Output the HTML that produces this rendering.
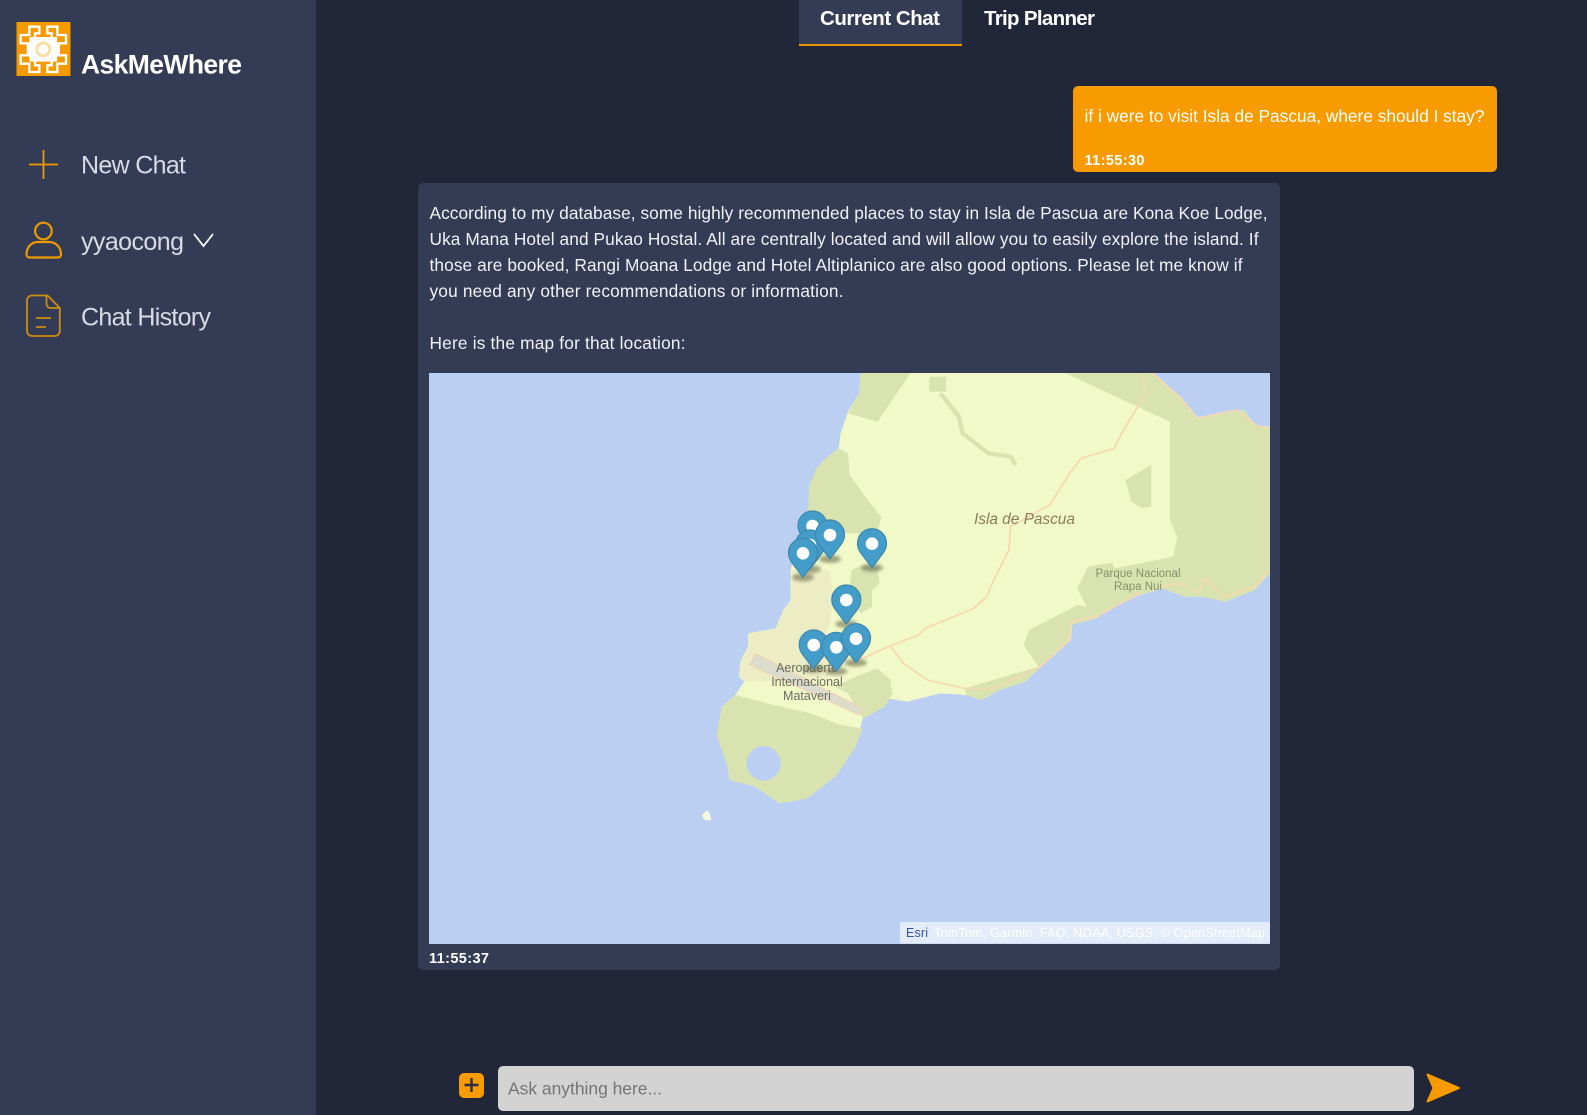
<!DOCTYPE html>
<html lang="en"><head><meta charset="utf-8"><title>AskMeWhere</title>
<style>
html,body{margin:0;padding:0;width:1587px;height:1115px;overflow:hidden;background:#212738;font-family:"Liberation Sans",sans-serif}
.a{position:absolute;box-sizing:border-box}
svg{position:absolute;left:0;top:0}
text{font-family:"Liberation Sans",sans-serif}
.m{font-size:17.3px;fill:#f1f2f5}
.n{font-size:25px;fill:#d8dbe4}
.t{font-size:14.5px;font-weight:bold;fill:#fff}
</style></head><body>
<div class="a" style="left:0;top:0;width:316px;height:1115px;background:#343b55"></div>
<div class="a" style="left:799px;top:0;width:163px;height:45.5px;background:#343b55;border-bottom:2px solid #e89400"></div>
<div class="a" style="left:1073px;top:86px;width:424px;height:86px;background:#f89b00;border-radius:5px"></div>
<div class="a" style="left:418px;top:183px;width:862px;height:787px;background:#343b55;border-radius:5px"></div>
<div class="a" style="left:429px;top:373px;width:841px;height:571px;background:#bbcff2"></div>
<div class="a" style="left:498px;top:1066px;width:916px;height:45px;background:#d3d3d3;border-radius:5px"></div>
<div class="a" style="left:459px;top:1073px;width:25px;height:25px;background:#f89b00;border-radius:5px"></div>

<svg width="1587" height="1115" viewBox="0 0 1587 1115" xmlns="http://www.w3.org/2000/svg">
<defs>
<clipPath id="mc"><rect x="429" y="373" width="841" height="571"/></clipPath>
<filter id="b" x="-50%" y="-100%" width="200%" height="300%"><feGaussianBlur stdDeviation="1.6"/></filter>
<path id="k" d="M58 35H88V55H75V70H62V85H32V60H58Z" fill="none" stroke="#fff" stroke-width="7"/>
<g id="p"><ellipse cx="0" cy="24" rx="11" ry="4" fill="#55553a" opacity=".5" filter="url(#b)"/><path d="M0 24L-11 9.500C-13.300 6.500-14.500 3-14.500-.5A14.500 14.500 0 0 1 14.500-.5C14.500 3 13.300 6.500 11 9.500Z" fill="#449cc8" stroke="#3c88ad" stroke-width="1.2" stroke-linejoin="round"/><circle r="6.300" fill="#fff"/></g>
</defs>

<!-- logo -->
<rect x="16.500" y="22" width="54" height="54" fill="#f59b00"/>
<g transform="translate(10,15) scale(.33333)">
<use href="#k"/><use href="#k" transform="translate(200,0) scale(-1,1)"/><use href="#k" transform="translate(0,206) scale(1,-1)"/><use href="#k" transform="translate(200,206) scale(-1,-1)"/>
<path d="M62 66H138V88H150V118H138V140H62V118H50V88H62Z" fill="#fff"/>
<circle cx="100" cy="103" r="24" fill="#f7dfa6"/><circle cx="100" cy="103" r="15" fill="#fff"/>
</g>

<text x="81" y="73.500" font-size="26.500" font-weight="bold" fill="#fff" textLength="161">AskMeWhere</text>
<text x="81" y="173.500" class="n" textLength="105">New Chat</text>
<text x="81" y="250" class="n" textLength="103">yyaocong</text>
<text x="81" y="325.500" class="n" textLength="130">Chat History</text>

<path d="M43.500 150V179M29 164.500H58" stroke="#ee9a00" stroke-width="1.800" fill="none"/>
<circle cx="43.400" cy="231" r="8.300" fill="none" stroke="#ee9a00" stroke-width="2.200"/>
<path d="M29.500 257.500H58.500a3 3 0 0 0 2.500-3c0-8-6-12.500-12-12.500H38c-6 0-11.500 4.500-11.500 12.500a3 3 0 0 0 3 3Z" fill="none" stroke="#ee9a00" stroke-width="2.200"/>
<path d="M194 234L203.500 246L213 234" fill="none" stroke="#fff" stroke-width="1.800"/>
<path d="M32 295.500H47.500L59.800 308V331a5 5 0 0 1-5 5H32a5 5 0 0 1-5-5V300.500a5 5 0 0 1 5-5ZM46.500 296V304a4 4 0 0 0 4 4H59.800M36 318H51M36 327H46" fill="none" stroke="#cf8c12" stroke-width="1.800"/>

<!-- tabs -->
<text x="820" y="25" font-size="20.500" font-weight="bold" fill="#fff" textLength="120">Current Chat</text>
<text x="984" y="25" font-size="20.500" font-weight="bold" fill="#fff" textLength="111">Trip Planner</text>

<!-- user msg -->
<text x="1084.500" y="122" font-size="17.300" fill="#fff" textLength="400">if i were to visit Isla de Pascua, where should I stay?</text>
<text x="1084.500" y="165" class="t" textLength="60">11:55:30</text>

<!-- bot msg -->
<text x="429.500" y="219" class="m" textLength="838">According to my database, some highly recommended places to stay in Isla de Pascua are Kona Koe Lodge,</text>
<text x="429.500" y="245" class="m" textLength="829">Uka Mana Hotel and Pukao Hostal. All are centrally located and will allow you to easily explore the island. If</text>
<text x="429.500" y="271" class="m" textLength="813">those are booked, Rangi Moana Lodge and Hotel Altiplanico are also good options. Please let me know if</text>
<text x="429.500" y="297" class="m" textLength="414">you need any other recommendations or information.</text>
<text x="429.500" y="349" class="m" textLength="256">Here is the map for that location:</text>

<!-- map -->
<g clip-path="url(#mc)">
<g transform="matrix(.3699,0,0,.33333,700,370)">
<path fill="#f2f9c9" d="M435 0L430 70L400 125L380 190L375 235L340 265L315 295L295 350L293 430L270 480L255 560L245 600L245 690L225 720L205 775L130 790L130 830L110 870L105 920L120 935L95 975L60 1010L45 1095L75 1190L80 1230L150 1250L215 1300L290 1285L370 1215L420 1130L440 1045L500 1010L505 985L560 995L650 970L720 975L760 990L810 960L880 935L920 890L960 850L1005 800L1000 765L1070 745L1130 700L1190 675L1250 655L1310 680L1360 680L1420 695L1500 660L1540 610V170L1500 165L1470 120L1345 145L1300 80L1230 20L1215 0Z"/>
<g fill="#d8e3b0">
<path d="M435 0H575L480 155L400 130L430 70Z"/>
<rect x="620" y="20" width="45" height="45"/>
<path d="M970 0H1215L1300 80L1345 145L1470 120L1500 165L1540 170V610L1500 660L1420 695L1360 680L1310 680L1250 655L1190 675L1130 700L1070 745L1000 765L1005 800L960 850L920 890L880 935L810 960L760 990L720 975L716 955L915 890L875 825L890 780L1020 705L1045 710L1020 655L1050 590L1115 578L1120 595L1280 560L1290 500L1270 450V155Z"/>
<path d="M1150 330L1220 285V410L1195 415L1165 395Z"/>
<path d="M375 235L400 250L405 315L460 400L490 440L480 490L380 490L340 480L293 430L295 350L315 295L340 265Z"/>
<path d="M410 600L440 585L480 590L485 640L465 660L465 710L435 730L410 680L405 650Z"/>
<path d="M365 950L420 920L480 895L515 930L520 970L500 1010L440 1045L400 970Z"/>
<path d="M95 975L200 1005L300 1030L380 1065L440 1075L420 1130L370 1215L290 1285L215 1300L150 1250L80 1230L75 1190L45 1095L60 1010Z"/>
</g>
<path fill="none" stroke="#d8e3b0" stroke-width="12" d="M650 70L700 140L710 190L780 250L840 260L853 285"/>
<ellipse cx="172" cy="1180" rx="46" ry="52" fill="#bbcff2"/>
<path fill="#ecedc4" d="M250 600H350L360 680L350 770L340 790L410 880L360 910L330 930L120 935L105 920L110 870L130 830L130 790L205 775L225 720L245 690Z"/>
<g fill="none" stroke="#f6d9b0" stroke-width="5">
<path d="M1190 0L1205 70L1140 190L1120 235L1030 265L1000 310L945 405L840 470L835 540L790 640L775 680L740 715L610 775L590 795L510 830L400 885"/>
<path d="M515 830L550 880L615 930L715 955H790L915 895L1000 810L1005 755L1070 740L1190 670"/>
<path d="M1215 0L1300 85L1345 145L1450 120L1510 170L1540 175"/>
<path d="M1250 650L1300 640L1350 670L1360 625L1420 680L1500 650L1540 600"/>
</g>
<path d="M150 850L440 1015L430 1035L135 885Z" fill="#dcdccc" stroke="#f6d3b0" stroke-width="3"/>
<path d="M5 1335L20 1320L28 1335L30 1352L12 1350Z" fill="#f5f8de"/>
</g>
<text x="974" y="524" font-size="15.500" font-style="italic" fill="#8a7a60" textLength="101">Isla de Pascua</text>
<g font-size="11.500" fill="#8a8f6a" text-anchor="middle"><text x="1138" y="577">Parque Nacional</text><text x="1138" y="590">Rapa Nui</text></g>
<g font-size="12.500" fill="#6d6d62" text-anchor="middle"><text x="807" y="672">Aeropuerto</text><text x="807" y="686">Internacional</text><text x="807" y="700">Mataveri</text></g>
<use href="#p" x="812.500" y="526"/><use href="#p" x="810" y="545"/><use href="#p" x="830" y="535"/><use href="#p" x="872" y="543.700"/><use href="#p" x="803" y="553.300"/><use href="#p" x="846.300" y="600"/><use href="#p" x="813.700" y="645"/><use href="#p" x="836.300" y="647.300"/><use href="#p" x="856" y="638.700"/>
<rect x="900" y="922" width="370" height="21.500" fill="#fff" opacity=".6"/>
<text x="906" y="937" font-size="12.500" fill="#3355aa" textLength="22">Esri</text>
<text x="934" y="937" font-size="12.500" fill="#fff" textLength="331">TomTom, Garmin, FAO, NOAA, USGS, © OpenStreetMap</text>
</g>
<text x="429" y="963" class="t" textLength="60">11:55:37</text>

<!-- input row -->
<text x="508" y="1094.500" font-size="17.500" fill="#757575" textLength="154">Ask anything here...</text>
<path d="M471.500 1078V1092M464.500 1085H478.500" stroke="#2a3044" stroke-width="2.400" fill="none"/>
<path d="M1427.500 1074.500L1459 1088L1427.500 1101.500L1433.500 1088Z" fill="#f89b00" stroke="#f89b00" stroke-width="2" stroke-linejoin="round"/>
</svg>
</body></html>
